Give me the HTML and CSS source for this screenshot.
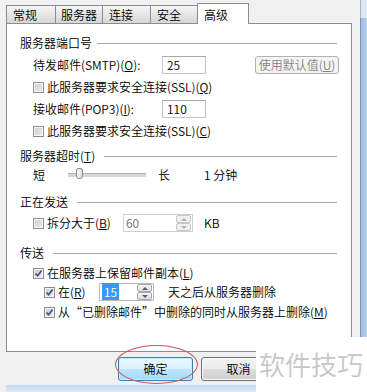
FILE: index.html
```html
<!DOCTYPE html>
<html lang="zh-CN">
<head>
    <meta charset="UTF-8">
    <meta name="viewport" content="width=device-width, initial-scale=1.0">
    <title>高级</title>
    <link rel="stylesheet" href="styles.css">
</head>
<body>
    <div class="main">
        <div class="tabs">
            <div class="tab t1">常规</div>
            <div class="tab t2">服务器</div>
            <div class="tab t3">连接</div>
            <div class="tab t4">安全</div>
            <div class="tab active">高级</div>
        </div>
        <div class="panel">
            <div class="group-title g1"><span>服务器端口号</span><i></i></div>
            <div class="row field ind1 m5">
                <span class="lbl">待发邮件(SMTP)(<u>O</u>):</span>
                <div class="textbox">25</div>
                <button class="btn-disabled" disabled>使用默认值(<u>U</u>)</button>
            </div>
            <div class="row ind1 m5"><span class="cb"></span>此服务器要求安全连接(SSL)(<u>Q</u>)</div>
            <div class="row field ind1 m5">
                <span class="lbl">接收邮件(POP3)(<u>I</u>):</span>
                <div class="textbox">110</div>
            </div>
            <div class="row ind1 m5"><span class="cb"></span>此服务器要求安全连接(SSL)(<u>C</u>)</div>

            <div class="group-title m9"><span>服务器超时(<u>T</u>)</span><i></i></div>
            <div class="row ind1 m3">
                <span>短</span>
                <div class="slider"><div class="thumb"></div></div>
                <span class="long">长</span>
                <span class="minutes">1 分钟</span>
            </div>

            <div class="group-title m11"><span>正在发送</span><i></i></div>
            <div class="row field ind1 m4">
                <span class="cb"></span>
                <span class="split-lbl">拆分大于(<u>B</u>)</span>
                <div class="spinbox disabled w70">
                    <span class="val">60</span>
                    <div class="spin-btns"><span class="up"></span><span class="down"></span></div>
                </div>
                <span class="kb">KB</span>
            </div>

            <div class="group-title m13"><span>传送</span><i></i></div>
            <div class="row ind1 m4"><span class="cb checked"><svg viewBox="0 0 9 9"><path d="M1.5 4.5 L3.6 6.8 L7.6 1.6"/></svg></span>在服务器上保留邮件副本(<u>L</u>)</div>
            <div class="row ind2 m3">
                <span class="cb checked"><svg viewBox="0 0 9 9"><path d="M1.5 4.5 L3.6 6.8 L7.6 1.6"/></svg></span>
                <span class="at-lbl">在(<u>R</u>)</span>
                <div class="spinbox w55">
                    <span class="val"><span class="sel">15</span></span>
                    <div class="spin-btns"><span class="up"></span><span class="down"></span></div>
                </div>
                <span class="days">天之后从服务器删除</span>
            </div>
            <div class="row ind2 m4"><span class="cb checked"><svg viewBox="0 0 9 9"><path d="M1.5 4.5 L3.6 6.8 L7.6 1.6"/></svg></span>从“已删除邮件”中删除的同时从服务器上删除(<u>M</u>)</div>
        </div>
        <div class="buttons">
            <button class="btn ok">确定</button>
            <button class="btn">取消</button>
        </div>
        <div class="bottom-strip"></div>
    </div>
    <div class="frame">
        <div class="frame-top"></div>
        <div class="frame-mid"></div>
    </div>

    <div class="mark"></div>
    <div class="corner"></div>
    <div class="watermark">软件技巧</div>
</body>
</html>
```

FILE: styles.css
```css
body {
    margin: 0;
    width: 367px;
    height: 392px;
    overflow: hidden;
    display: flex;
    background: #f0f0f0;
    font-family: "Noto Sans CJK SC", sans-serif;
    font-size: 12px;
    font-weight: 350;
    line-height: 16px;
    color: #000;
}
u { text-decoration: underline; text-underline-offset: 1px; }

.main {
    width: 360px;
    padding-left: 6px;
    box-sizing: border-box;
    display: flex;
    flex-direction: column;
}

/* tabs */
.tabs {
    height: 23px;
    display: flex;
    align-items: flex-end;
}
.tab {
    height: 18px;
    box-sizing: border-box;
    border: 1px solid #898c95;
    border-bottom: none;
    padding: 1px 0 0 6px;
    background: linear-gradient(#f6f6f6, #e6e6e6 50%, #d6d6d6);
    line-height: 16px;
}
.t1 { width: 50px; }
.t2 { width: 48px; margin-left: -1px; padding-left: 5px; }
.t3 { width: 49px; margin-left: -1px; }
.t4 { width: 48px; margin-left: -1px; }
.tab.active {
    width: 52px;
    height: 21px;
    margin-left: -1px;
    margin-bottom: -1px;
    padding-top: 3px;
    background: #fff;
    position: relative;
    z-index: 1;
}

/* panel */
.panel {
    width: 346px;
    height: 329px;
    box-sizing: border-box;
    border: 1px solid #898c95;
    background: #fff;
    padding: 11px 14px 0 13px;
    display: flex;
    flex-direction: column;
}
.group-title {
    height: 16px;
    display: flex;
    align-items: center;
}
.group-title i {
    flex: 1;
    height: 1px;
    margin-left: 9px;
    background: #a9a9a9;
}
.g1 i { margin-left: 5px; }

.row {
    height: 16px;
    display: flex;
    align-items: center;
    white-space: nowrap;
}
.row.field { height: 18px; }
.ind1 { padding-left: 13px; }
.ind2 { padding-left: 24px; }
.m3 { margin-top: 3px; }
.m4 { margin-top: 4px; }
.m5 { margin-top: 5px; }
.m9 { margin-top: 9px; }
.m11 { margin-top: 11px; }
.m13 { margin-top: 13px; }

.lbl { width: 129px; }
.textbox {
    width: 44px;
    height: 18px;
    box-sizing: border-box;
    border: 1px solid #c2c5ca;
    border-top-color: #a5a8ae;
    padding-left: 4px;
    line-height: 16px;
}
.btn-disabled {
    margin-left: auto;
    margin-right: -2px;
    width: 84px;
    height: 18px;
    padding: 0;
    font: inherit;
    line-height: 14px;
    color: #838383;
    background: #f4f4f4;
    border: 1px solid #adb2b5;
    border-radius: 3px;
}

/* checkbox */
.cb {
    width: 11px;
    height: 11px;
    box-sizing: border-box;
    border: 1px solid #8f8f8f;
    background: linear-gradient(135deg, #c9cdd3, #eeeeee);
    box-shadow: inset 0 0 0 1px #f7f7f7;
    margin-right: 3px;
    flex-shrink: 0;
}
.cb svg { display: block; width: 9px; height: 9px; }
.cb svg path { fill: none; stroke: #3a5283; stroke-width: 1.7; }

/* slider */
.slider {
    width: 78px;
    height: 3px;
    margin-left: 23px;
    background: #d6d6d6;
    border-top: 1px solid #b2b2b2;
    position: relative;
}
.thumb {
    position: absolute;
    left: 8px;
    top: -6px;
    width: 7px;
    height: 11px;
    box-sizing: border-box;
    border: 1px solid #8a8a8a;
    border-radius: 2px 2px 3px 3px;
    background: linear-gradient(90deg, #fdfdfd, #dcdcdc);
}
.long { margin-left: 12px; }
.minutes { margin-left: 34px; }

/* spin boxes */
.split-lbl { width: 76px; }
.at-lbl { width: 41px; }
.spinbox {
    height: 18px;
    box-sizing: border-box;
    border: 1px solid #b5b8bd;
    display: flex;
}
.w70 { width: 70px; }
.w55 { width: 55px; }
.spinbox .val {
    flex: 1;
    padding-left: 2px;
    line-height: 16px;
}
.spinbox.disabled { border-color: #cfcfcf; }
.spinbox.disabled .val { color: #6d6d6d; }
.sel {
    background: #3399ff;
    color: #fff;
    padding: 0 2px;
}
.spin-btns {
    width: 15px;
    display: flex;
    flex-direction: column;
    margin: 0 1px 0 0;
}
.spin-btns span {
    flex: 1;
    box-sizing: border-box;
    border: 1px solid #a7a7a7;
    border-radius: 2px;
    background: linear-gradient(#f4f4f4, #dedede);
    display: flex;
    align-items: center;
    justify-content: center;
}
.spin-btns .up::after {
    content: "";
    border-left: 3px solid transparent;
    border-right: 3px solid transparent;
    border-bottom: 3px solid #4c607a;
}
.spin-btns .down::after {
    content: "";
    border-left: 3px solid transparent;
    border-right: 3px solid transparent;
    border-top: 3px solid #4c607a;
}
.spinbox.disabled .spin-btns span { border-color: #c8c8c8; background: #f0f0f0; }
.spinbox.disabled .spin-btns span::after { border-top-color: #b0b0b0; border-bottom-color: #b0b0b0; }
.kb { margin-left: 11px; }
.days { margin-left: 14px; }

/* dialog buttons */
.buttons {
    display: flex;
    gap: 8px;
    margin-top: 5px;
    padding-left: 112px;
}
.btn {
    width: 75px;
    height: 24px;
    padding: 0;
    font: inherit;
    color: #000;
    border: 1px solid #707070;
    border-radius: 3px;
    background: linear-gradient(#f2f2f2, #ebebeb 50%, #dddddd 50%, #cfcfcf);
    box-shadow: inset 0 0 0 1px #fbfbfb;
}
.btn.ok {
    border-color: #3c7fb1;
    background: linear-gradient(#eaf6fd, #d9f0fc 50%, #bee6fd 50%, #a7d9f5);
    box-shadow: inset 0 0 0 1px #c8ecfc;
}
.bottom-strip {
    height: 7px;
    margin-top: 4px;
    background: linear-gradient(#c5d9ef, #dce9f6);
}

/* window frame on the right */
.frame {
    width: 7px;
    background: #fff;
}
.frame-top {
    height: 18px;
    border-left: 1px solid #a8b6c8;
    background: #dfe8f3;
}
.frame-mid {
    height: 319px;
    border-left: 1px solid #7b93b3;
    background: linear-gradient(90deg, #9dbde2, #b6cfea);
}

/* annotation and watermark */
.mark {
    position: absolute;
    left: 115px;
    top: 345px;
    width: 83px;
    height: 39px;
    box-sizing: border-box;
    border: 1px solid #c95a5c;
    border-radius: 50%;
}
.corner {
    position: absolute;
    left: 345px;
    top: 337px;
    width: 22px;
    height: 14px;
    background: #fff;
}
.watermark {
    position: absolute;
    left: 256px;
    top: 351px;
    width: 111px;
    height: 41px;
    box-sizing: border-box;
    padding-left: 3px;
    background: #fff;
    color: #c6c6c6;
    font-size: 26px;
    line-height: 26px;
}
```
